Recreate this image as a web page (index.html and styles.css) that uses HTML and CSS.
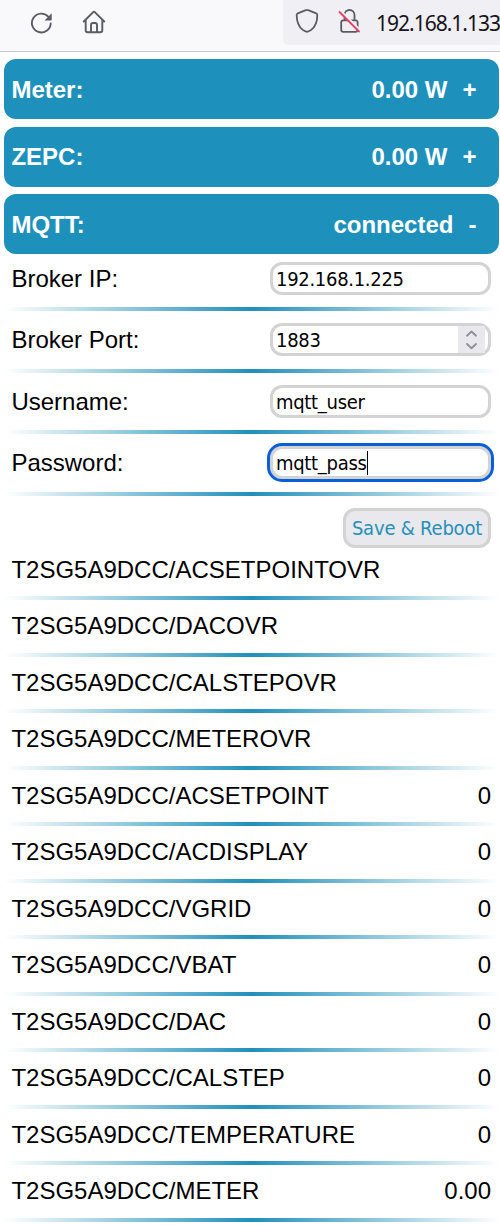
FILE: index.html
```html
<!DOCTYPE html>
<html lang="en">
<head>
<meta charset="utf-8">
<title>Meter</title>
<link rel="stylesheet" href="styles.css">
</head>
<body>
<header class="toolbar">
  <svg class="icon reload" width="24" height="24" viewBox="0 0 24 24"><path d="M20.700 12.500A9.400 9.400 0 1 1 18.500 6" fill="none" stroke="#5b5b66" stroke-width="1.900" stroke-linecap="round"/><path d="M21.700 2.200v6.400q0 1-1 1h-6.200z" fill="#5b5b66"/></svg>
  <svg class="icon home" width="24" height="24" viewBox="0 0 24 24"><path d="M1.800 11.500 11.200 2.100q.8-.8 1.600 0l9.400 9.400M3.700 10v10.200q0 2 2 2h12.600q2 0 2-2V10M9 22v-7q0-2 2-2h2q2 0 2 2v7" fill="none" stroke="#5b5b66" stroke-width="1.900" stroke-linecap="round" stroke-linejoin="round"/></svg>
  <div class="address">
    <svg class="icon shield" width="24" height="26" viewBox="0 0 24 26"><path d="M12 1.900q.6 0 1.200.3l8 3.100q1.100.4 1.100 1.600 0 10.200-6.100 15-1.800 1.400-4.200 2-2.400-.6-4.200-2Q1.700 17.100 1.700 6.900q0-1.200 1.100-1.600l8-3.100q.6-.3 1.200-.3z" fill="none" stroke="#5b5b66" stroke-width="1.800"/></svg>
    <svg class="icon lock" width="24" height="26" viewBox="0 0 24 26"><path d="M7.500 12V7a5 5 0 0 1 10 0V12M11 12.300h7.600q2 0 2 2v7.500q0 2-2 2H6.200q-2 0-2-2v-7.500q0-2 2-2z" fill="none" stroke="#5b5b66" stroke-width="1.800"/><path d="m3.800 2.800 19.500 19.500" stroke="#f0eff4" stroke-width="2"/><path d="M2.500 4 22 23.500" stroke="#e83f6a" stroke-width="1.800" stroke-linecap="round"/></svg>
    <span class="url">192.168.1.133</span>
  </div>
</header>
<main class="page">
  <div class="cards">
    <div class="card"><span>Meter:</span><span class="value">0.00 W</span><span class="toggle">+</span></div>
    <div class="card"><span>ZEPC:</span><span class="value">0.00 W</span><span class="toggle">+</span></div>
    <div class="card"><span>MQTT:</span><span class="value">connected</span><span class="toggle">-</span></div>
  </div>
  <div class="fields">
    <div class="field"><span>Broker IP:</span><div class="input">192.168.1.225</div></div>
    <div class="field"><span>Broker Port:</span><div class="input">1883<span class="spinner"><svg width="27" height="27" viewBox="0 0 27 27"><path d="m9 9.700 4.500-4.200 4.500 4.200M9 18l4.500 4.200L18 18" fill="none" stroke="#8f8f9d" stroke-width="1.900" stroke-linecap="round" stroke-linejoin="round"/></svg></span></div></div>
    <div class="field"><span>Username:</span><div class="input">mqtt_user</div></div>
    <div class="field"><span>Password:</span><div class="input focused">mqtt_pass<span class="caret"></span></div></div>
  </div>
  <div class="actions"><button class="save">Save &amp; Reboot</button></div>
  <div class="topics">
    <div class="topic"><span>T2SG5A9DCC/ACSETPOINTOVR</span></div>
    <div class="topic"><span>T2SG5A9DCC/DACOVR</span></div>
    <div class="topic"><span>T2SG5A9DCC/CALSTEPOVR</span></div>
    <div class="topic"><span>T2SG5A9DCC/METEROVR</span></div>
    <div class="topic"><span>T2SG5A9DCC/ACSETPOINT</span><span>0</span></div>
    <div class="topic"><span>T2SG5A9DCC/ACDISPLAY</span><span>0</span></div>
    <div class="topic"><span>T2SG5A9DCC/VGRID</span><span>0</span></div>
    <div class="topic"><span>T2SG5A9DCC/VBAT</span><span>0</span></div>
    <div class="topic"><span>T2SG5A9DCC/DAC</span><span>0</span></div>
    <div class="topic"><span>T2SG5A9DCC/CALSTEP</span><span>0</span></div>
    <div class="topic"><span>T2SG5A9DCC/TEMPERATURE</span><span>0</span></div>
    <div class="topic"><span>T2SG5A9DCC/METER</span><span>0.00</span></div>
  </div>
</main>
</body>
</html>
```
FILE: styles.css
```css
* { box-sizing: border-box; }
body {
  margin: 0;
  background: #fff;
  color: #000;
  font: 24px/28px "Liberation Sans", Arial, sans-serif;
  overflow: hidden;
}
.toolbar {
  display: flex;
  height: 52px;
  padding-left: 29.5px;
  background: #f9f9fb;
  border-bottom: 1px solid #c9c8cc;
}
.icon { display: block; flex: none; }
.reload { margin-top: 11px; }
.home { margin: 10px 0 0 28.5px; }
.address {
  display: flex;
  flex: 1;
  min-width: 0;
  height: 45px;
  margin-left: 177px;
  padding-left: 12px;
  background: #f0eff4;
  border-radius: 0 0 0 5px;
  overflow: hidden;
}
.shield { margin-top: 8px; }
.lock { margin: 8px 0 0 18px; }
.url {
  margin: 8.5px 0 0 15px;
  color: #15141a;
  font: 21px/28px "Noto Sans", sans-serif;
  letter-spacing: -1px;
  white-space: nowrap;
}
.page { padding: 7px 1px 0 4px; }
.cards { display: flex; flex-direction: column; gap: 7.5px; }
.card {
  display: flex;
  align-items: center;
  height: 60px;
  padding: 1.5px 22.6px 0 7.4px;
  border-radius: 12px;
  background: #1d90bb;
  color: #fff;
  font-weight: bold;
}
.value { margin-left: auto; }
.toggle { width: 14px; margin-left: 15px; }
.card:last-child .toggle { width: 8px; }
.fields { margin-top: -4px; }
.field, .topic {
  display: flex;
  justify-content: space-between;
  padding: 0 8px 0 7.4px;
  border-bottom: 4.5px solid;
  border-image: linear-gradient(to right, transparent, #2090ba, transparent) 0 0 1 0;
}
.field { height: 61.4px; padding-top: 12px; }
.field > span { margin-top: 3px; }
.input {
  position: relative;
  display: flex;
  width: 221px;
  height: 33px;
  padding-left: 3px;
  border: 3px solid #d3d3d3;
  border-radius: 12px;
  background: #fff;
  font: 20px/28px "DejaVu Sans Condensed", "DejaVu Sans", sans-serif;
  font-stretch: condensed;
  letter-spacing: -.3px;
}
.focused { outline: 3px solid #0a5fd6; }
.caret { width: 1px; height: 24px; margin-top: 2px; background: #000; }
.spinner { width: 27px; height: 27px; margin: 0 3px 0 auto; background: #e9e9ed; }
.spinner svg { display: block; }
.actions { display: flex; justify-content: flex-end; padding: 12px 8px 0; }
.save {
  width: 148px;
  height: 40px;
  padding: 1px 0 0;
  border: 3px solid #d3d3d3;
  border-radius: 12px;
  background: #e9e9ed;
  color: #2590ba;
  font: 20px/28px "DejaVu Sans Condensed", "DejaVu Sans", sans-serif;
  font-stretch: condensed;
  letter-spacing: -.2px;
  white-space: nowrap;
}
.topics { margin-top: -4px; }
.topic { height: 56.5px; padding-top: 12.4px; }
```
